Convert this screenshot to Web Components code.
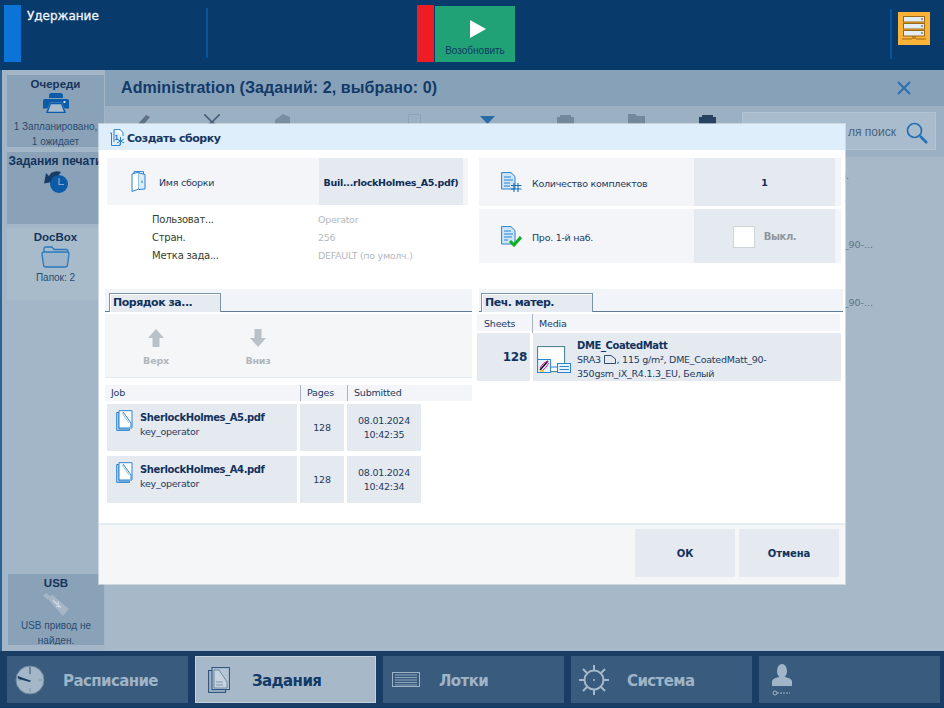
<!DOCTYPE html>
<html lang="ru"><head><meta charset="utf-8"><title>Создать сборку</title>
<style>
html,body{margin:0;padding:0}
body{width:944px;height:708px;overflow:hidden;position:relative;display:flex;flex-direction:column;font:11px "Liberation Sans",Arial,sans-serif;color:#15345c}
</style></head><body>

<op-topbar>Удержание</op-topbar>

<op-main>
  <op-sidebar slot="side">
    <op-side-card style="height:72px;--ib:6px;--lh:15px" heading="Очереди" tone="dark">
      <svg slot="icon" width="26" height="20" viewBox="0 0 26 20"><path d="M6 2.500Q6 0 8 0H18Q20 0 20 2.500V5H6Z" fill="#0b5ba8"/><path d="M2 6H24Q26 6 26 8V15.500H21.500L19 9.500H7L4.500 15.500H0V8Q0 6 2 6Z" fill="#0b5ba8"/><path d="M7.500 10.500H18.500L22 19.500H4Z" fill="#a9bccd" stroke="#0b5ba8" stroke-width="1.400"/><rect x="20.500" y="8" width="2" height="2" fill="#cfe0ef"/></svg>
      1 Запланировано,<br>1 ожидает
    </op-side-card>
    <op-side-card style="height:72px;--hs:12px" heading="Задания печати" tone="dark">
      <svg slot="icon" width="26" height="24" viewBox="0 0 26 24"><path d="M8 3Q13 0 18 2L15 6Q11 6 9.500 9L12 11.500L1 13.500L3 3L6 6Z" fill="#173c66"/><circle cx="16" cy="14" r="9" fill="#0b5ba8"/><path d="M16 8V14.500H21" fill="none" stroke="#8ea8be" stroke-width="1.200"/></svg>
    </op-side-card>
    <op-side-card style="height:72px;--ib:3px;margin-top:-1px" heading="DocBox" tone="light">
      <svg slot="icon" width="29" height="22" viewBox="0 0 29 22"><path d="M3 6V3Q3 1 5 1H11L13 3.500H25Q27 3.500 27 5.500V7" fill="#a5bacd" stroke="#2a78bd" stroke-width="1.300"/><path d="M1 8Q1 6 3 6H26Q28 6 28 8L26.500 19Q26.300 21 24 21H5Q2.700 21 2.500 19Z" fill="#9db5ca" stroke="#2a78bd" stroke-width="1.300"/></svg>
      Папок: 2
    </op-side-card>
    <span style="flex:1"></span>
    <op-side-card style="height:71px;margin:0 0 6px 1px;width:96px;--ib:1px;--lh:15px" heading="USB" tone="dark">
      <svg slot="icon" width="28" height="25" viewBox="0 0 28 25"><path d="M1 3.500L4 1L8.500 4.500L5.500 7.500Z" fill="#a5b6c6"/><path d="M6 7L10 2.500L27 17L21 24Z" fill="#a5b6c6"/><path d="M11 8.500L15 12M14 11L19 15.500M16 9.500L17 12M14 14L17 15" stroke="#d4dee7" stroke-width="1.100" fill="none"/></svg>
      USB привод не найден.
    </op-side-card>
  </op-sidebar>
  <op-jobs-bg>Administration (Заданий: 2, выбрано: 0)</op-jobs-bg>
</op-main>

<op-navbar>
  <op-nav-tab>
    <svg slot="icon" width="30" height="30" viewBox="0 0 30 30"><circle cx="15" cy="15" r="14" fill="#a4b7c8" stroke="#6d879e" stroke-width="1"/><path d="M15 23V27M2.500 15H6M24 15H27.500" stroke="#7d95aa" stroke-width="1.100"/><path d="M15 2V9" stroke="#5f7a93" stroke-width="1.600"/><path d="M15.500 16L3 11.500L3.500 13.500L14.500 16.500Z" fill="#143a63" stroke="#143a63" stroke-width=".8"/></svg>
    Расписание
  </op-nav-tab>
  <op-nav-tab active>
    <svg slot="icon" width="22" height="26" viewBox="0 0 22 26"><rect x=".6" y="3.500" width="17" height="21.900" fill="#9fb3c6" stroke="#284e77"/><rect x="4" y=".6" width="17.400" height="22" fill="#b4c5d4" stroke="#284e77"/><path d="M11 3L19 15V21H6V3Z" fill="#c7d4df" stroke="#5a7895" stroke-width=".8"/><path d="M8 15H15M8 18H15" stroke="#7c95ac"/></svg>
    Задания
  </op-nav-tab>
  <op-nav-tab>
    <svg slot="icon" width="28" height="15" viewBox="0 0 28 15"><rect x=".5" y=".5" width="27" height="14" fill="none" stroke="#9db1c4"/><path d="M3 3H25M3 5.500H25M3 8H25M3 10.500H25M3 13H25" stroke="#8ea6bb" stroke-width="1"/></svg>
    Лотки
  </op-nav-tab>
  <op-nav-tab>
    <svg slot="icon" width="30" height="30" viewBox="0 0 30 30"><g stroke="#a4b8c9" stroke-width="2" fill="none"><circle cx="15" cy="15" r="9.500"/><path d="M15 0V6M15 24V30M0 15H6M24 15H30M4 4L8.500 8.500M21.500 21.500L26 26M26 4L21.500 8.500M8.500 21.500L4 26"/></g><circle cx="15" cy="15" r="1" fill="#a4b8c9"/></svg>
    Система
  </op-nav-tab>
  <op-nav-tab>
    <svg slot="icon" width="20" height="32" viewBox="0 0 20 32"><ellipse cx="10" cy="7" rx="5" ry="7" fill="#a0b5c7"/><path d="M0 22V17Q1 14 7 13H13Q19 14 20 17V22Z" fill="#a0b5c7"/><circle cx="3" cy="29" r="2" fill="none" stroke="#a0b5c7"/><path d="M5 29H18" stroke="#a0b5c7" stroke-dasharray="2 1"/></svg>
  </op-nav-tab>
</op-navbar>

<op-dialog>
  <svg slot="icon" width="17" height="18" viewBox="0 0 17 18"><path d="M2.500 4V16.500H11V14M2.500 4H1" fill="none" stroke="#2c82cc"/><path d="M5 .6H11L14 3.500V7" fill="#fff" stroke="#2c82cc"/><path d="M5 .6V13" stroke="#2c82cc"/><path d="M11.500 8V16M8 10L15 14M15 10L8 14" stroke="#2c82cc"/><text x="5.500" y="11" font-size="7" fill="#1a6cb5" font-family="Liberation Sans">1</text></svg>
  <span slot="title">Создать сборку</span>

  <op-setting-row slot="top-left" label="Имя сборки" style="--h:47px;--label-w:212px;--val-w:144px;--end:5px;--icon-x:24px;--text-x:13px">
    <svg slot="icon" width="15" height="21" viewBox="0 0 15 21"><path d="M1 3L8 1V18L1 20.400Z" fill="#fff" stroke="#2c82cc"/><path d="M8 2L14 3.500V18L8 18.500" fill="#dcecf9" stroke="#2c82cc"/><path d="M3 2.500V.6H12.500V3M11 9.500V12" stroke="#2c82cc" fill="none"/></svg>
    <b slot="value">Buil...rlockHolmes_A5.pdf)</b>
  </op-setting-row>
  <op-info-list slot="top-left">
    <span>Пользоват...</span><i>Operator</i>
    <span>Стран.</span><i>256</i>
    <span>Метка зада...</span><i>DEFAULT (по умолч.)</i>
  </op-info-list>

  <op-setting-row slot="top-right" label="Количество комплектов" style="--h:48px;--label-w:215px;--val-w:141px;--end:6px;--icon-x:22px;--text-x:10px">
    <svg slot="icon" width="21" height="20" viewBox="0 0 21 20"><path d="M.6.6H10L14 4.500V17H.6Z" fill="#cfe5f8" stroke="#2c82cc"/><path d="M3 5H10M3 8H12M3 11H9M3 14H9" stroke="#2c82cc"/><path d="M13 11V20M17 11V20M10 13.500H20.500M10 17H20.500" stroke="#1a6cb5" stroke-width="1.100"/></svg>
    <b slot="value">1</b>
  </op-setting-row>
  <op-setting-row slot="top-right" label="Про. 1-й наб." style="--h:54px;--label-w:215px;--val-w:141px;--end:6px;--icon-x:22px;--text-x:10px;margin-top:3px">
    <svg slot="icon" width="21" height="21" viewBox="0 0 21 21"><path d="M.6.6H10L14 4.500V18H.6Z" fill="#cfe5f8" stroke="#2c82cc"/><path d="M3 5H10M3 8H12M3 11H11M3 14H7" stroke="#2c82cc"/><path d="M9 15L13 19L20 11" fill="none" stroke="#12ad22" stroke-width="3"/></svg>
    <op-check slot="value">Выкл.</op-check>
  </op-setting-row>

  <op-tab-panel slot="bottom-left" label="Порядок за..." style="--tab-w:112px;--tab-x:4px">
    <op-order-tools>
      <op-tool>
        <svg slot="icon" width="18" height="18" viewBox="0 0 18 18"><path d="M9 0L17 9H12.500V18H5.500V9H1Z" fill="#bac2c9"/></svg>Верх
      </op-tool>
      <op-tool>
        <svg slot="icon" width="18" height="18" viewBox="0 0 18 18"><path d="M9 18L17 9H12.500V0H5.500V9H1Z" fill="#bac2c9"/></svg>Вниз
      </op-tool>
    </op-order-tools>
    <op-table-head columns="189px 47px 1fr" style="margin-top:7px;--pad:6px"><span>Job</span><span>Pages</span><span>Submitted</span></op-table-head>
    <op-job-row name="SherlockHolmes_A5.pdf" owner="key_operator" pages="128" date="08.01.2024" time="10:42:35"></op-job-row>
    <op-job-row name="SherlockHolmes_A4.pdf" owner="key_operator" pages="128" date="08.01.2024" time="10:42:34" style="margin-top:5px"></op-job-row>
  </op-tab-panel>

  <op-tab-panel slot="bottom-right" label="Печ. матер." style="--tab-w:112px;--tab-x:2px;width:364px">
    <op-table-head columns="48px 1fr" style="margin:2px 3px 0 -2px;height:17px;--pad:7px;--hl:19px"><span>Sheets</span><span>Media</span></op-table-head>
    <op-media-row style="margin-top:2px">
      <svg slot="icon" width="34" height="28" viewBox="0 0 34 28"><rect x=".6" y=".6" width="27" height="25" fill="#fff" stroke="#3f7b86"/><rect x=".6" y="13.500" width="13" height="13" fill="#e8f3fc" stroke="#2c82cc"/><path d="M3 24L11 15" stroke="#111" stroke-width="1.600"/><path d="M3 22Q6 16 11 15M5 25Q9 22 12 17" fill="none" stroke="#d21fb0"/><path d="M3 25H7" stroke="#e6d21a" stroke-width="1.500"/><path d="M14 21H20" stroke="#2c82cc"/><rect x="20.500" y="17.500" width="13" height="9" fill="#e8f3fc" stroke="#2c82cc"/><path d="M22.500 20.500H32M22.500 23.500H32" stroke="#2c82cc"/></svg>
    </op-media-row>
  </op-tab-panel>

  <op-button slot="footer">ОК</op-button>
  <op-button slot="footer">Отмена</op-button>
</op-dialog>

<script>
function el(name, css, html){
  customElements.define(name, class extends HTMLElement{
    constructor(){super();this.attachShadow({mode:'open'});}
    connectedCallback(){
      const h = typeof html==='function'?html(this):html;
      this.shadowRoot.innerHTML='<style>'+css+'</style>'+h;
    }
  });
}
el('op-topbar',`
:host{display:flex;height:70px;flex:none;background:#083a6b;box-sizing:border-box;position:relative}
.st{width:17px;height:57px;margin:5px 0 0 4px;background:#0b74d6}
.txt{width:179px;margin:0 0 0 6px;padding-top:9px;color:#f2f6fa;font:12px/15px "DejaVu Sans",sans-serif;-webkit-text-stroke:.3px #f2f6fa}
.div{width:2px;height:50px;margin-top:8px;background:#0a549c}
.sp{width:209px}
.red{width:17px;height:57px;margin-top:5px;background:#ee1c25}
.go{width:80px;height:56px;margin:6px 0 0 1px;background:#21a276;box-sizing:border-box;display:flex;flex-direction:column;align-items:center;color:#0b3a63;font:10px "Liberation Sans",sans-serif}
.go svg{margin:14px 0 7px 6px}
.sp2{width:375px}
.or{width:32px;height:33px;margin:12px 0 0 6px;background:#fcb236;display:flex;align-items:center;justify-content:center}
`,`<div class="st"></div><div class="txt"><slot></slot></div><div class="div"></div><div class="sp"></div>
<div class="red"></div><div class="go"><svg width="16" height="18" viewBox="0 0 16 18"><path d="M0 0L16 9L0 18Z" fill="#fff"/></svg>Возобновить</div><div class="sp2"></div><div class="div" style="height:50px;margin-top:9px"></div>
<div class="or"><svg width="26" height="25" viewBox="0 0 26 25"><g fill="#e3edf5" stroke="#9a6a12"><rect x="2.500" y=".5" width="21" height="5.500"/><rect x="2.500" y="7.500" width="21" height="5.500"/><rect x="2.500" y="14.500" width="21" height="5.500"/></g><path d="M1 23H11M15 23H25M12 20V23M14 20V23" stroke="#9a6a12" stroke-width="1.200"/><path d="M20 3H22M20 10H22M20 17H22" stroke="#444"/></svg></div>`);

el('op-main',`:host{display:flex;height:581px;flex:none;background:#a7b9c9;border-left:2px solid #2d6394;box-sizing:border-box;overflow:hidden}
`,`<slot name="side"></slot><slot></slot>`);

el('op-sidebar',`:host{display:flex;flex-direction:column;width:103px;flex:none;box-sizing:border-box;background:#a3b6c7;padding:5px 0 0 5px;gap:5px;}
`,`<slot></slot>`);

el('op-side-card',`:host{display:flex;flex-direction:column;align-items:center;box-sizing:border-box;width:97px;flex:none;font:10px/var(--lh,14px) "Liberation Sans",sans-serif;color:#2a4b70;text-align:center;overflow:hidden;padding-top:2px}
:host([tone=dark]){background:#8aa2b8}
:host([tone=light]){background:#a8bbcb}
.h{font:bold var(--hs,11.500px)/14px "Liberation Sans",sans-serif;color:#15345c;white-space:nowrap}
.i{display:flex;justify-content:center;margin:2px 0 var(--ib,2px)}
`,h=>`<div class="h">${h.getAttribute('heading')}</div><div class="i"><slot name="icon"></slot></div><div><slot></slot></div>`);

el('op-jobs-bg',`:host{flex:1;display:flex;flex-direction:column;min-width:0;position:relative}
.hd{height:36px;flex:none;background:#87a1b8;display:flex;align-items:center;padding-left:16px;font:bold 16px "Liberation Sans",sans-serif;letter-spacing:.08px;color:#123a68}
.x{margin-left:auto;margin-right:33px}
.tb{height:51px;flex:none;background:#9bb0c3;display:flex;align-items:flex-start;position:relative}
.i{position:absolute;top:8px}
.s{position:absolute;left:637px;top:6px;width:194px;height:38px;box-sizing:border-box;background:#a9bccd;border:1px solid #b2c3d2;color:#47637f;font:12px/38px "Liberation Sans",sans-serif;text-align:right;padding-right:39px;white-space:nowrap}
.l{position:absolute;right:7px;top:9px}
.r{display:block;color:#5d7488;font:9.500px/14px "DejaVu Sans",sans-serif;text-align:right;white-space:nowrap}
`,h=>`<div class="hd"><slot></slot><svg class="x" width="14" height="14" viewBox="0 0 14 14"><path d="M1 1L13 13M13 1L1 13" stroke="#2d72b0" stroke-width="2"/></svg></div>
<div class="tb">
<svg class="i" style="left:30px" width="16" height="10" viewBox="0 0 16 10"><path d="M3 10L11 1L15 3L9 10Z" fill="#5f7182"/></svg>
<svg class="i" style="left:99px" width="16" height="10" viewBox="0 0 16 10"><path d="M0 0L8 8L16 0" fill="none" stroke="#47607a" stroke-width="1.600"/><path d="M8 8L4 11M8 8L12 11" stroke="#47607a" stroke-width="1.600"/></svg>
<svg class="i" style="left:170px" width="15" height="10" viewBox="0 0 15 10"><path d="M0 6L8 0L15 3V10H0Z" fill="#7a8e9f"/></svg>
<svg class="i" style="left:303px" width="13" height="10" viewBox="0 0 13 10"><rect x=".5" y=".5" width="12" height="12" fill="none" stroke="#87a0b5" stroke-dasharray="2 1"/></svg>
<svg class="i" style="left:375px;top:10px" width="15" height="8" viewBox="0 0 15 8"><path d="M0 0H15L7.500 8Z" fill="#2a6aa6"/></svg>
<svg class="i" style="left:452px" width="17" height="10" viewBox="0 0 17 10"><path d="M3 3V1H14V3H17V10H0V3Z" fill="#73889a"/></svg>
<svg class="i" style="left:523px" width="17" height="10" viewBox="0 0 17 10"><path d="M0 0H7L9 2H17V10H0Z" fill="#73889a"/></svg>
<svg class="i" style="left:594px" width="17" height="10" viewBox="0 0 17 10"><path d="M3 3V1H14V3H17V10H0V3Z" fill="#27435f"/></svg>
<div class="s">ля поиск<svg class="l" width="22" height="22" viewBox="0 0 22 22"><circle cx="8.500" cy="8.500" r="7" fill="none" stroke="#2470b3" stroke-width="1.700"/><path d="M14 14L21 21" stroke="#2470b3" stroke-width="2.600"/></svg></div>
</div>
<div style="padding:10px 71px 0 0">
<span class="r" style="margin-right:24px;margin-top:2px">о.</span>
<span class="r" style="margin-top:55px">DME_90-...</span>
<span class="r" style="margin-top:44px">DME_90-...</span>
</div>`);

el('op-navbar',`:host{display:flex;height:57px;flex:none;box-sizing:border-box;background:#1a3d66;padding:5px 4px 5px 7px;gap:7px;border-bottom:1px solid #0a3a68}`,`<slot></slot>`);

el('op-nav-tab',`:host{position:relative;display:flex;width:181px;height:47px;flex:none;align-items:center;box-sizing:border-box;background:#385b7e;color:#9fb4c6;font:bold 15px "DejaVu Sans",sans-serif;letter-spacing:-.6px}
:host([active]){background:#a7b9c9;color:#123a68;border:1px solid #c4d1dc}
.ic{width:46px;margin-right:10px;flex:none;display:flex;justify-content:center;align-items:center}
.t{padding-top:2px}
`,h=>`<div class="ic"><slot name="icon"></slot></div><span class="t"><slot></slot></span>`);

el('op-dialog',`:host{position:absolute;left:99px;top:124px;width:746px;height:460px;display:flex;flex-direction:column;background:#fff;box-shadow:0 0 0 1px rgba(230,236,242,.6);z-index:5;font:10px "Liberation Sans",sans-serif}
.t{height:26px;flex:none;box-sizing:border-box;padding:2px 0 0 10px;background:#deeefb;display:flex;align-items:center;gap:1px;font:bold 11px "DejaVu Sans",sans-serif;letter-spacing:-.45px;color:#17375f}
.top{height:139px;flex:none;display:grid;grid-template-columns:372px 1fr;padding:8px 0 0 8px;box-sizing:border-box}
.top .c{display:flex;flex-direction:column}
.bot{flex:1;display:grid;grid-template-columns:374px 1fr;padding-left:6px;min-height:0}
.f{height:61px;flex:none;box-sizing:border-box;background:#f4f6f8;border-top:2px solid #e6ebf0;display:flex;justify-content:flex-end;gap:4px;padding:4px 6px 0 0}
`,`<div class="t"><slot name="icon"></slot><slot name="title"></slot></div>
<div class="top"><div class="c"><slot name="top-left"></slot></div><div class="c"><slot name="top-right"></slot></div></div>
<div class="bot"><slot name="bottom-left"></slot><slot name="bottom-right"></slot></div>
<div class="f"><slot name="footer"></slot></div>`);

el('op-setting-row',`:host{display:flex;align-self:flex-start;height:var(--h);flex:none;background:#f3f5f8;font:9.500px "DejaVu Sans",sans-serif;letter-spacing:-.27px;color:#1d3a60;padding-right:var(--end)}
.l{width:var(--label-w);display:flex;align-items:center;flex:none;box-sizing:border-box;padding-left:var(--icon-x)}
.t{margin-left:var(--text-x);padding-top:2px}
.v{width:var(--val-w);flex:none;background:#e5eaf1;display:flex;align-items:center;justify-content:center;font-weight:bold;color:#0e2d58;white-space:nowrap;box-sizing:border-box;padding-top:1px}
`,h=>`<div class="l"><slot name="icon"></slot><span class="t">${h.getAttribute('label')}</span></div><div class="v"><slot name="value"></slot></div>`);

el('op-info-list',`:host{display:grid;grid-template-columns:166px 1fr;padding:6px 0 0 45px;font:10px/18px "DejaVu Sans",sans-serif;letter-spacing:-.25px;color:#33402e}
::slotted(i){font-style:normal;color:#b4b9bd;font-size:9.500px;letter-spacing:-.28px}`,`<slot></slot>`);

el('op-check',`:host{display:flex;align-items:center;gap:9px;color:#8e969e;font:bold 10px "DejaVu Sans",sans-serif;letter-spacing:-.45px}
.b{width:20px;height:20px;background:#fff;border:1px solid #ced4da;display:block}`,`<span class="b"></span><slot></slot>`);

el('op-tab-panel',`:host{display:flex;flex-direction:column;min-width:0;width:367px;box-sizing:border-box}
.bar{height:23px;flex:none;background:#f1f4f8;box-sizing:border-box;border-bottom:1px solid #5d7b96;position:relative}
.tab{position:absolute;left:var(--tab-x);top:4px;width:var(--tab-w);height:19px;box-sizing:border-box;border:1px solid #7d93a7;border-bottom:none;background:#e6ebf2;font:bold 11px/17px "DejaVu Sans",sans-serif;letter-spacing:-.5px;color:#12325c;padding-left:3px;box-shadow:inset 1px 1px 0 #fff}
`,h=>`<div class="bar"><div class="tab">${h.getAttribute('label')}</div></div><slot></slot>`);

el('op-order-tools',`:host{display:flex;height:64px;margin-top:2px;box-sizing:border-box;background:#f4f6f8;border-bottom:1px solid #e5e9ee;padding:15px 0 0 28px;gap:56px}`,`<slot></slot>`);
el('op-tool',`:host{display:flex;flex-direction:column;width:46px;align-items:center;gap:8px;color:#b0b7bd;font:bold 9.500px "DejaVu Sans",sans-serif;letter-spacing:-.2px}`,`<slot name="icon"></slot><slot></slot>`);

el('op-table-head',`:host{display:block;height:16px;background:#f3f5f8}
.g{display:grid;height:100%;font:9.500px/var(--hl,16px) "DejaVu Sans",sans-serif;letter-spacing:-.2px;color:#1d3a60;padding-left:var(--pad,6px);box-sizing:border-box}
::slotted(span){padding-left:6px;border-left:1px solid #a9b4bf}
::slotted(span:first-child){border-left:0;padding-left:0}
`,h=>`<div class="g" style="grid-template-columns:${h.getAttribute('columns')}"><slot></slot></div>`);

el('op-job-row',`:host{display:flex;height:47px;margin:3px 0 0 2px;gap:3px;color:#1d3a60;font:9.500px/14px "DejaVu Sans",sans-serif;letter-spacing:-.25px}
.c{background:#e5eaf1;display:flex;align-items:center;justify-content:center;text-align:center}
.n{width:190px;justify-content:flex-start;text-align:left;padding-left:9px;box-sizing:border-box;align-items:flex-start}
.n svg{margin:6px 7px 0 0;flex:none}
.n b{display:block;color:#12325c;margin-top:7px;font-size:10px;letter-spacing:-.4px}
`,h=>`<div class="c n"><svg width="17" height="21" viewBox="0 0 17 21"><path d="M.7 2.500H3V19H13.500V20.400H.7Z" fill="#bcdcf5" stroke="#2c82cc"/><path d="M3 .7H16V18H3Z" fill="#fff" stroke="#2c82cc"/><path d="M7 2L15 13V17" fill="none" stroke="#2c82cc"/><path d="M6 3L13 13" stroke="#9bc4e6"/></svg><div><b>${h.getAttribute('name')}</b>${h.getAttribute('owner')}</div></div>
<div class="c" style="width:44px">${h.getAttribute('pages')}</div>
<div class="c" style="width:74px">${h.getAttribute('date')}<br>${h.getAttribute('time')}</div>`);

el('op-media-row',`:host{display:flex;height:48px;margin-left:-2px;gap:3px;color:#1d3a60;font:9.500px/14px "DejaVu Sans",sans-serif;letter-spacing:-.25px}
.s{width:53px;background:#e5eaf1;display:flex;align-items:center;justify-content:flex-end;padding-right:3px;box-sizing:border-box;font:bold 12px "DejaVu Sans",sans-serif;color:#12325c}
.m{width:308px;background:#e5eaf1;display:flex;box-sizing:border-box;padding:6px 0 0 4px}
.m .ic{width:40px;margin-top:7px;flex:none}
b{display:block;color:#12325c;font-size:10px;letter-spacing:-.4px;line-height:14px}
.ln{display:block;white-space:nowrap;height:14px}
`,`<div class="s">128</div><div class="m"><div class="ic"><slot name="icon"></slot></div><div><b>DME_CoatedMatt</b><span class="ln"><span>SRA3 </span><svg width="12" height="9" viewBox="0 0 12 9" style="vertical-align:-1px"><path d="M.5.5H7L11.500 4V8.500H.5Z" fill="none" stroke="#1d3a60" stroke-width=".9"/></svg><span style="margin-left:1px">, 115 g/m², DME_CoatedMatt_90-</span></span><span class="ln">350gsm_iX_R4.1.3_EU, Белый</span></div></div>`);

el('op-button',`:host{display:flex;width:100px;height:48px;align-items:center;justify-content:center;background:#e5eaf1;color:#12325c;font:bold 10px "DejaVu Sans",sans-serif;letter-spacing:-.1px}`,`<slot></slot>`);
</script>
</body></html>
